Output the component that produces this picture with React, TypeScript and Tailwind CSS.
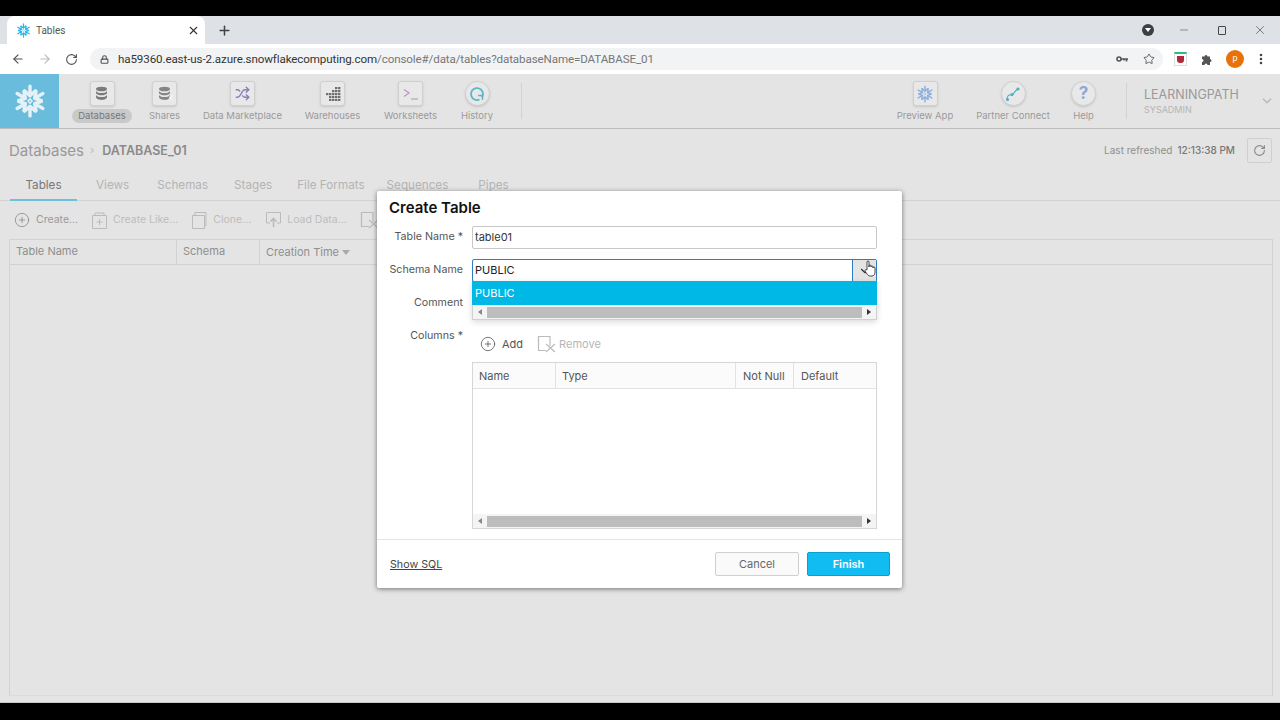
import React from "react";
import {
  ArrowLeft,
  ArrowRight,
  RotateCw,
  Lock,
  Star,
  MoreVertical,
  Plus,
  X,
  Minus,
  ChevronDown,
  Shuffle,
  CirclePlus,
} from "lucide-react";

const Snow = ({ size, color, sw = 2 }: { size: number; color: string; sw?: number }) => (
  <svg width={size} height={size} viewBox="0 0 32 32" fill="none" stroke={color} strokeWidth={sw} strokeLinecap="round" strokeLinejoin="round">
    {[0, 60, 120, 180, 240, 300].map((a) => (
      <g key={a} transform={`rotate(${a} 16 16)`}>
        <path d="M16 2v6.500M11 6.500 16 11l5-4.500" />
      </g>
    ))}
    <path d="M16 14l2 2-2 2-2-2z" strokeWidth={sw * 0.45} />
  </svg>
);

const XBox = ({ color }: { color: string }) => (
  <svg width="20" height="18" viewBox="0 0 20 18" fill="none" stroke={color} strokeWidth="1.2">
    <path d="M13 11V1.500H1.500v14H9" />
    <path d="M9 9l9 8M18 9l-9 8" />
  </svg>
);

const DbStack = ({ color, share }: { color: string; share?: boolean }) => (
  <svg width="16" height="16" viewBox="0 0 16 16" fill={color}>
    <ellipse cx="7.500" cy="3" rx="5.500" ry="2.300" />
    <path d="M2 5c1 1.600 3.200 2.100 5.500 2.100S12 6.600 13 5v2.200c-1 1.500-3.200 2-5.500 2S3 8.700 2 7.200z" />
    <path d="M2 9c1 1.600 3.200 2.100 5.500 2.100S12 10.600 13 9v2c0 1.600-2.500 2.900-5.500 2.900S2 12.600 2 11z" />
    {share && <path d="M15.500 9.500 12 11.500l3.500 2" fill="none" stroke="#fff" strokeWidth="1" />}
  </svg>
);

const Tile = ({ round, children }: { round?: boolean; children: React.ReactNode }) => (
  <div
    className={`w-[25px] h-[25px] flex items-center justify-center bg-[#e8e8e8] border border-[#d0d0d0] shadow-sm ${
      round ? "rounded-full" : "rounded-[3px]"
    }`}
  >
    {children}
  </div>
);

const NavItem = ({
  label,
  className,
  active,
  round,
  children,
}: {
  label: string;
  className: string;
  active?: boolean;
  round?: boolean;
  children: React.ReactNode;
}) => (
  <div className={`flex flex-col items-center pt-[7px] shrink-0 ${className}`}>
    <Tile round={round}>{children}</Tile>
    <div
      className={`mt-[3px] h-[14px] leading-[14px] text-[9.5px] whitespace-nowrap ${
        active ? "w-full text-center rounded-full bg-[#c9c9c9] text-[#777]" : "text-[#9a9a9a]"
      }`}
    >
      {label}
    </div>
  </div>
);

const Scrollbar = () => (
  <div className="h-[14px] flex items-center bg-[#f4f4f4]">
    <div className="w-[14px] flex justify-center">
      <div className="w-0 h-0 border-y-[3px] border-y-transparent border-r-[4px] border-r-[#888]" />
    </div>
    <div className="flex-1 h-[11px] bg-[#bdbdbd]" />
    <div className="w-[14px] flex justify-center">
      <div className="w-0 h-0 border-y-[3px] border-y-transparent border-l-[4px] border-l-[#333]" />
    </div>
  </div>
);

const FormLabel = ({ children }: { children: React.ReactNode }) => (
  <div className="w-[74px] shrink-0 text-right text-[10.7px] leading-[22px] text-[#555] whitespace-nowrap">{children}</div>
);

const App = () => {
  return (
    <div className="w-[1280px] h-[720px] bg-black pt-[16px] pb-[17px] overflow-hidden font-['Inter',sans-serif] relative">
      <div className="h-full flex flex-col bg-[#e4e4e4] border-b border-[#c8c8c8]">
        {/* browser tabs */}
        <div className="h-[28px] shrink-0 bg-[#dee1e6] flex items-end pl-[7px] font-['Roboto',sans-serif]">
          <div className="w-[198px] h-[28px] bg-white rounded-t-[8px] flex items-center pl-[9px] pr-[5px]">
            <Snow size={15} color="#29b5e8" sw={2.6} />
            <span className="ml-[5px] text-[10px] text-[#555]">Tables</span>
            <X size={13} strokeWidth={2} className="ml-auto text-[#333]" />
          </div>
          <div className="h-[28px] flex items-center ml-[12px]">
            <Plus size={15} strokeWidth={2.4} className="text-[#444]" />
          </div>
          <div className="ml-auto h-[28px] flex items-center">
            <div className="w-[12px] h-[12px] rounded-full bg-[#3c4043] flex items-center justify-center">
              <div className="w-0 h-0 border-x-[3px] border-x-transparent border-t-[4px] border-t-white" />
            </div>
            <Minus size={12} strokeWidth={1} className="ml-[24px] text-[#333]" />
            <div className="ml-[28px] w-[8px] h-[9px] border border-[#444] rounded-[1px]" />
            <X size={14} strokeWidth={1} className="ml-[27px] mr-[13px] text-[#333]" />
          </div>
        </div>
        {/* address bar */}
        <div className="h-[30px] shrink-0 bg-white flex items-center font-['Roboto',sans-serif]">
          <ArrowLeft size={14} strokeWidth={2} className="ml-[11px] text-[#555]" />
          <ArrowRight size={14} strokeWidth={2} className="ml-[13px] text-[#bbb]" />
          <RotateCw size={13} strokeWidth={2} className="ml-[13px] text-[#555]" />
          <div className="ml-[12px] w-[1073px] h-[22px] rounded-full bg-[#f1f3f4] flex items-center pl-[10px] pr-[8px]">
            <Lock size={9} strokeWidth={3} className="text-[#555]" />
            <span className="ml-[9px] pt-[1px] text-[11.6px] tracking-[-0.01em] whitespace-nowrap text-[#333]">
              ha59360.east-us-2.azure.snowflakecomputing.com<span className="text-[#777]">/console#/data/tables?databaseName=DATABASE_01</span>
            </span>
            <svg className="ml-auto" width="13" height="8" viewBox="0 0 13 8" fill="none" stroke="#555" strokeWidth="1.600">
              <circle cx="3" cy="4" r="2" />
              <path d="M5 4h7M10.500 4v2.500M8 4v1.500" />
            </svg>
            <Star size={12} strokeWidth={1.6} className="ml-[14px] text-[#444]" />
          </div>
          <div className="ml-[11px] w-[13px] h-[14px] border border-[#ddd] border-t-2 border-t-[#2dbd80] flex items-center justify-center">
            <div className="w-[7px] h-[7px] rounded-b-[3px] bg-[#b02a37]" />
          </div>
          <svg className="ml-[14px]" width="13" height="13" viewBox="0 0 13 13" fill="#555">
            <path d="M1 3.500h2.500a1.500 1.500 0 0 1 3 0H9V6a1.500 1.500 0 0 1 0 3v3H6.500a1.500 1.500 0 0 0-3 0H1V9a1.500 1.500 0 0 0 0-3z" />
          </svg>
          <div className="ml-[12px] w-[18px] h-[18px] rounded-full bg-[#e8710a] text-white text-[9px] flex items-center justify-center">p</div>
          <MoreVertical size={14} strokeWidth={2.4} className="ml-[10px] text-[#444]" />
        </div>

        {/* snowflake nav */}
        <div className="h-[55px] shrink-0 flex border-b border-[#bdbdbd]">
          <div className="w-[59px] bg-[#69bcdc] flex items-center justify-center">
            <Snow size={34} color="#e4f2f8" sw={3.2} />
          </div>
          <NavItem label="Databases" className="ml-[13px] w-[60px]" active>
            <DbStack color="#7a7a7a" />
          </NavItem>
          <NavItem label="Shares" className="ml-[17px] w-[31px]">
            <DbStack color="#858585" share />
          </NavItem>
          <NavItem label="Data Marketplace" className="ml-[23px] w-[79px]">
            <Shuffle size={15} strokeWidth={2.2} className="text-[#8a7db8]" />
          </NavItem>
          <NavItem label="Warehouses" className="ml-[23px] w-[55px]">
            <svg width="16" height="14" viewBox="0 0 16 14" fill="#6f6f6f">
              {[[10, 0], [13, 0], [7, 3], [10, 3], [13, 3], [1, 6], [4, 6], [7, 6], [10, 6], [13, 6], [4, 9], [7, 9], [10, 9], [13, 9], [4, 12], [7, 12], [10, 12], [13, 12]].map(([x, y]) => (
                <rect key={`${x}-${y}`} x={x} y={y} width="2.4" height="2.2" />
              ))}
            </svg>
          </NavItem>
          <NavItem label="Worksheets" className="ml-[24px] w-[53px]">
            <svg width="16" height="14" viewBox="0 0 16 14" fill="none" stroke="#b596c9" strokeWidth="1.2">
              <path d="M1 2.500 6 6 1 9.500" />
              <path d="M8 12h7" stroke="#aaa" />
            </svg>
          </NavItem>
          <NavItem label="History" className="ml-[24px] w-[32px]" round>
            <svg width="16" height="16" viewBox="0 0 16 16" fill="none" stroke="#5bb7c9" strokeWidth="1.8">
              <path d="M10.500 13.500A6 6 0 1 1 14 8c0 1.500-.5 2.600-1.200 3.500" />
              <path d="M9 9.500l4.500 0 0 4.500" strokeWidth="1.4" />
            </svg>
          </NavItem>
          <div className="ml-[28px] w-px h-[36px] mt-[9px] bg-[#d2d2d2]" />
          <NavItem label="Preview App" className="ml-[375px] w-[56px]">
            <Snow size={18} color="#8fb1dd" sw={2.6} />
          </NavItem>
          <NavItem label="Partner Connect" className="ml-[23px] w-[74px]" round>
            <svg width="16" height="16" viewBox="0 0 16 16" fill="#4fb2bd" stroke="#4fb2bd" strokeWidth="1.2">
              <path d="M2 14c0-4 1-5 3-5s3 0 4-2 2-3 4-4" fill="none" />
              <circle cx="2.500" cy="13.500" r="1" />
              <circle cx="7" cy="8.500" r="1" />
              <circle cx="13" cy="3" r="1" />
            </svg>
          </NavItem>
          <NavItem label="Help" className="ml-[21px] w-[25px]" round>
            <span className="text-[17px] font-bold text-[#8fa9d6] leading-none">?</span>
          </NavItem>
          <div className="ml-[30px] w-px h-[36px] mt-[9px] bg-[#d2d2d2]" />
          <div className="ml-[17px] pt-[13px]">
            <div className="text-[12.5px] leading-[16px] text-[#999] whitespace-nowrap">LEARNINGPATH</div>
            <div className="text-[9px] leading-[12px] mt-[1px] text-[#b5b5b5]">SYSADMIN</div>
          </div>
          <ChevronDown size={14} strokeWidth={3} className="ml-[21px] mt-[20px] text-[#bbb]" />
        </div>

        {/* page */}
        <div className="flex-1 min-h-0 flex flex-col">
          <div className="h-[43px] shrink-0 flex items-center pl-[9px] pr-[8px]">
            <span className="pt-[1px] text-[15px] text-[#999]">Databases</span>
            <span className="ml-[6px] text-[11px] text-[#bbb]">›</span>
            <span className="ml-[8px] pt-[1px] text-[12.5px] font-semibold text-[#8a8a8a]">DATABASE_01</span>
            <span className="ml-auto text-[10px] text-[#8f8f8f]">Last refreshed</span>
            <span className="ml-[5px] text-[10px] font-medium text-[#777]">12:13:38 PM</span>
            <div className="ml-[12px] w-[25px] h-[25px] border border-[#d0d0d0] rounded-[2px] flex items-center justify-center">
              <RotateCw size={13} strokeWidth={2} className="text-[#888]" />
            </div>
          </div>
          <div className="h-[29px] shrink-0 flex border-b border-[#d2d2d2] pl-[10px] text-[11.7px] text-[#b4b4b4]">
            <div className="w-[67px] text-center pt-[5px] text-[#777] border-b-2 border-[#6dbfe0] h-[29px]">Tables</div>
            <div className="ml-[19px] pt-[5px]">Views</div>
            <div className="ml-[28px] pt-[5px]">Schemas</div>
            <div className="ml-[26px] pt-[5px]">Stages</div>
            <div className="ml-[25px] pt-[5px]">File Formats</div>
            <div className="ml-[22px] pt-[5px]">Sequences</div>
            <div className="ml-[30px] pt-[5px]">Pipes</div>
          </div>
          <div className="h-[38px] shrink-0 flex items-center pl-[14px] text-[10.5px] text-[#bdbdbd]">
            <CirclePlus size={16} strokeWidth={1} className="text-[#777]" />
            <span className="ml-[6px] text-[#999]">Create...</span>
            <svg className="ml-[14px]" width="15" height="17" viewBox="0 0 15 17" fill="none" stroke="#bbb">
              <path d="M3 3V1h9v2M.5 3.500h14v13H.5zM7.500 7v6M4.500 10h6" />
            </svg>
            <span className="ml-[6px]">Create Like...</span>
            <svg className="ml-[14px]" width="15" height="17" viewBox="0 0 15 17" fill="none" stroke="#bbb">
              <path d="M3 3V.5h11v13h-1.500M.5 3.500h12v13H.5z" />
            </svg>
            <span className="ml-[6px]">Clone...</span>
            <svg className="ml-[15px]" width="15" height="16" viewBox="0 0 15 16" fill="none" stroke="#bbb">
              <path d="M4 11H.5V.5h14V11H11" />
              <path d="M7.500 15V7M4.500 9.500l3-3 3 3" strokeWidth="1.600" />
            </svg>
            <span className="ml-[6px]">Load Data...</span>
            <div className="ml-[13px]"><XBox color="#bbb" /></div>
          </div>
          <div className="ml-[9px] mr-[7px] mb-[6px] flex-1 border border-[#d2d2d2] border-b-[#dcdcdc]">
            <div className="h-[25px] flex border-b border-[#d2d2d2] text-[11px] text-[#8f8f8f] leading-[23px]">
              <div className="w-[167px] pl-[6px] border-r border-[#d2d2d2]">Table Name</div>
              <div className="w-[83px] pl-[6px] border-r border-[#d2d2d2]">Schema</div>
              <div className="pl-[6px] flex items-center">
                Creation Time
                <div className="ml-[3px] w-0 h-0 border-x-[4px] border-x-transparent border-t-[5px] border-t-[#aaa]" />
              </div>
            </div>
          </div>
        </div>
      </div>

      {/* modal */}
      <div className="absolute left-[377px] top-[191px] w-[525px] h-[397px] bg-white rounded-[2px] shadow-[0_1px_5px_rgba(0,0,0,0.5)] flex flex-col">
        <div className="flex-1 min-h-0 pl-[12px] pr-[25px]">
          <div className="h-[35px] pt-[7px] text-[15px] leading-[20px] font-semibold text-[#111]">Create Table</div>
          <div className="flex">
            <FormLabel>Table Name *</FormLabel>
            <div className="ml-[9px] w-[405px] h-[23px] border border-[#c8c8c8] rounded-[2px] pl-[2px] text-[11px] leading-[21px] text-[#333]">table01</div>
          </div>
          <div className="flex mt-[10px] relative">
            <FormLabel>Schema Name</FormLabel>
            <div className="ml-[9px] w-[405px] h-[23px] border border-[#2f7cc4] rounded-[2px] flex text-[11px] leading-[21px] text-[#222]">
              <div className="flex-1 pl-[2px]">PUBLIC</div>
              <div className="w-[24px] bg-[#e4e4e4] border-l border-[#2f7cc4] flex items-center justify-center relative">
                <ChevronDown size={14} strokeWidth={2} className="text-[#333]" />
                <svg className="absolute left-[11px] top-[0px] z-20" width="13" height="17" viewBox="0 0 13 17" fill="#fff" stroke="#222" strokeWidth="0.8">
                  <path d="M3 10V2a1 1 0 0 1 2 0v5V6a1 1 0 0 1 2 0v1a1 1 0 0 1 2 0v1a1 1 0 0 1 2 0v4c0 2-1 4-3 4H6c-1.500 0-2-1-3-2L1 11c-.5-1 .8-1.800 2-1z" />
                </svg>
              </div>
            </div>
            <div className="absolute left-[83px] top-[22px] w-[405px] z-10 bg-white border-b border-[#d0d0d0] shadow-[0_2px_6px_rgba(0,0,0,0.15)]">
              <div className="h-[24px] bg-[#00b8e6] text-white text-[11px] leading-[24px] pl-[3px]">PUBLIC</div>
              <div className="border-x border-[#d0d0d0]">
                <Scrollbar />
              </div>
            </div>
          </div>
          <div className="flex mt-[10px] h-[21px]">
            <FormLabel>Comment</FormLabel>
          </div>
          <div className="flex mt-[12px]">
            <FormLabel>Columns *</FormLabel>
            <div className="ml-[9px] w-[405px]">
              <div className="h-[32px] flex items-center mt-[3px] pl-[8px] text-[11px]">
                <CirclePlus size={16} strokeWidth={1.1} className="text-[#444]" />
                <span className="ml-[6px] text-[#555]">Add</span>
                <div className="ml-[14px] flex"><XBox color="#bbb" /></div>
                <span className="ml-[2px] text-[#b5b5b5]">Remove</span>
              </div>
              <div className="mt-[2px] h-[167px] border border-[#d6d6d6] flex flex-col">
                <div className="h-[26px] shrink-0 flex border-b border-[#e2e2e2] bg-[#fbfbfb] text-[11px] text-[#555] leading-[26px]">
                  <div className="w-[83px] pl-[6px] border-r border-[#e2e2e2]">Name</div>
                  <div className="w-[180px] pl-[6px] border-r border-[#e2e2e2]">Type</div>
                  <div className="w-[58px] pl-[7px] border-r border-[#e2e2e2]">Not Null</div>
                  <div className="pl-[7px]">Default</div>
                </div>
                <div className="flex-1" />
                <Scrollbar />
              </div>
            </div>
          </div>
        </div>
        <div className="h-[49px] shrink-0 border-t border-[#e4e4e4] flex items-center pl-[13px] pr-[12px]">
          <span className="pt-[2px] text-[10.7px] underline text-[#444]">Show SQL</span>
          <button className="ml-auto w-[84px] h-[24px] border border-[#cfcfcf] rounded-[2px] bg-[#fafafa] text-[11px] text-[#666]">Cancel</button>
          <button className="ml-[8px] w-[83px] h-[24px] border border-[#0a9fd0] rounded-[2px] bg-[#11bcf2] text-[11px] font-semibold text-white">Finish</button>
        </div>
      </div>
    </div>
  );
};

export default App;
